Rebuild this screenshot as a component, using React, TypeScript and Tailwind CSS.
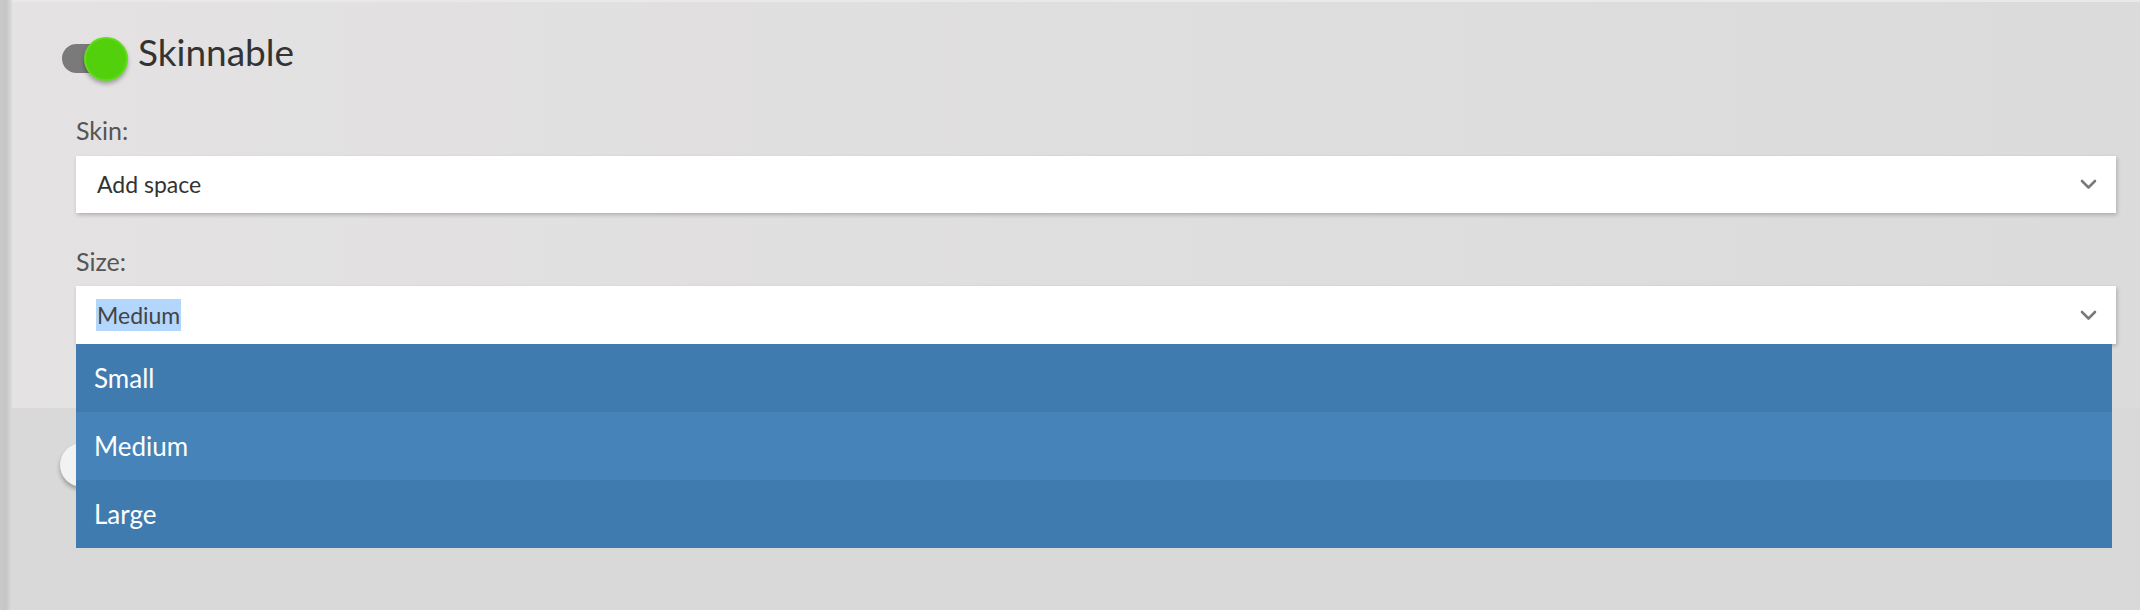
import React from 'react';

const font = { fontFamily: 'Lato, "Noto Sans", sans-serif' };

const Toggle = ({ on }: { on: boolean }) => (
  <div className={`relative h-[29px] w-[54px] shrink-0 rounded-full ${on ? 'bg-[#7a7a7a]' : 'bg-[#bdbdbd]'}`}>
    <span
      className={
        on
          ? 'absolute left-[22px] top-[-7px] h-[44px] w-[44px] rounded-full border-2 border-[#5fdd1c] bg-[#52d00c] shadow-[0_3px_4px_rgba(0,0,0,0.3)]'
          : 'absolute left-[-2px] top-[-7px] h-[44px] w-[44px] rounded-full bg-[#f2f2f2] shadow-[0_3px_4px_rgba(0,0,0,0.3)]'
      }
    />
  </div>
);

const Chevron = () => (
  <svg width="17" height="11" viewBox="0 0 17 11" fill="none">
    <path d="M2 2 L8.5 8.5 L15 2" stroke="#7a7a7a" strokeWidth="2.6" strokeLinecap="round" strokeLinejoin="round" />
  </svg>
);

const options = ['Small', 'Medium', 'Large'];

export default function App() {
  return (
    <div className="flex h-[610px] w-[2140px] bg-[#d9d9d9] text-[#333]" style={font}>
      {/* left edge shade */}
      <div className="w-[12px] shrink-0 bg-gradient-to-r from-[#c9c9c9] via-[#c6c6c6] to-[#dcdcdc]" />

      <div className="flex flex-1 flex-col">
        <div className="h-[408px] border-t-2 border-[#e9e9e9] bg-gradient-to-r from-[#e4e2e3] to-[#dbdbdb] pl-[50px] pr-[24px] pt-[34px]">
          <div className="flex h-[44px] items-center">
            <Toggle on />
            <span className="relative top-[-6px] ml-[22px] text-[37px] leading-[44px] text-[#333]">Skinnable</span>
          </div>

          <div className="pl-[14px]">
            <div className="mt-[34px] h-[32px] text-[25px] leading-[32px] text-[#555]">Skin:</div>
            <div className="mt-[10px] flex h-[57px] items-center justify-between bg-white pl-[21px] pr-[19px] shadow-[1px_2px_4px_rgba(0,0,0,0.22)]">
              <span className="text-[23px] text-[#333]">Add space</span>
              <Chevron />
            </div>

            <div className="mt-[32px] h-[32px] text-[25px] leading-[32px] text-[#555]">Size:</div>
            <div className="relative mt-[9px]">
              <div className="flex h-[58px] items-center justify-between bg-white pl-[20px] pr-[19px] shadow-[1px_2px_4px_rgba(0,0,0,0.22)]">
                <span className="bg-[#b3d6fd] px-px text-[23px] leading-[32px] text-[#444]">Medium</span>
                <Chevron />
              </div>
              <ul className="absolute left-0 right-[4px] top-[58px] z-10">
                {options.map((o, i) => (
                  <li
                    key={o}
                    className={`flex h-[68px] items-center pl-[18px] text-[26px] text-white ${i === 1 ? 'bg-[#4583b9]' : 'bg-[#3f7baf]'}`}
                  >
                    {o}
                  </li>
                ))}
              </ul>
            </div>
          </div>
        </div>

        <div className="pl-[50px] pt-[42px]">
          <div className="flex items-center">
            <Toggle on={false} />
          </div>
        </div>
      </div>
    </div>
  );
}
